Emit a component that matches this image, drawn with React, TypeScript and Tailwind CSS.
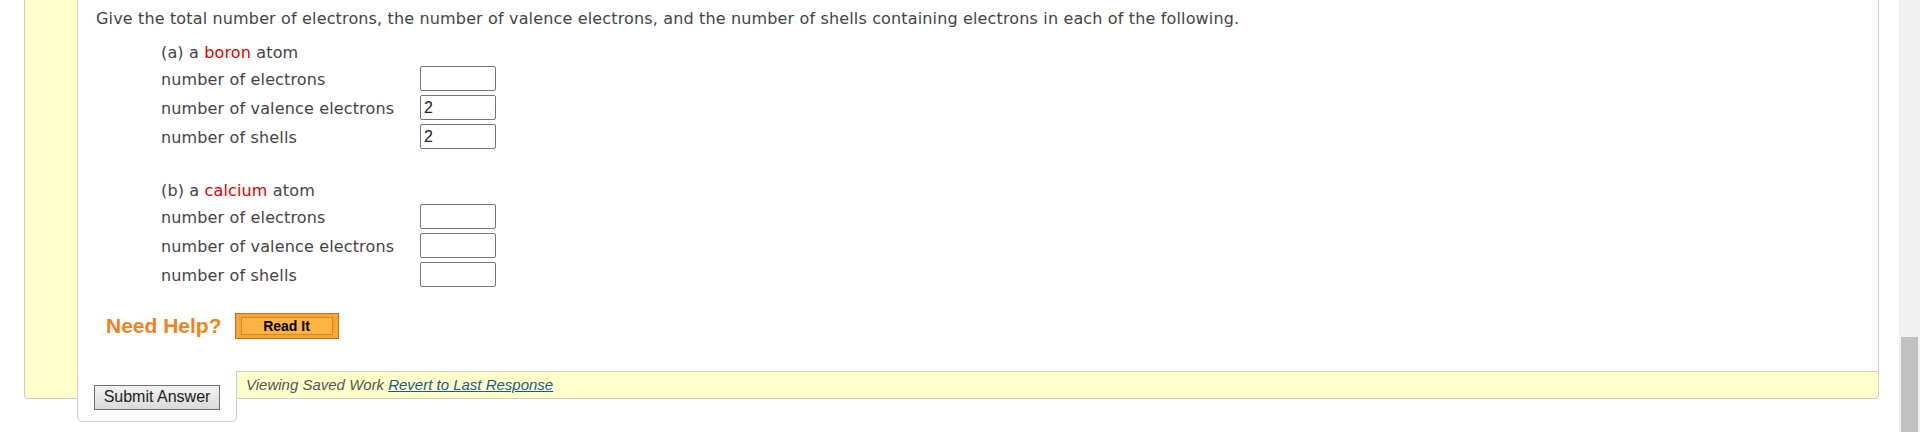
import React from "react";

const questions = [
  {
    label: "(a)",
    element: "boron",
    rows: [
      { text: "number of electrons", value: "" },
      { text: "number of valence electrons", value: "2" },
      { text: "number of shells", value: "2" },
    ],
  },
  {
    label: "(b)",
    element: "calcium",
    rows: [
      { text: "number of electrons", value: "" },
      { text: "number of valence electrons", value: "" },
      { text: "number of shells", value: "" },
    ],
  },
];

const AnswerBox = ({ value }: { value: string }) => (
  <input
    readOnly
    value={value}
    className="w-[76px] h-[25px] border border-[#767676] rounded-[2px] px-[3px] bg-white text-[16px] tracking-normal text-[#222] font-['Liberation_Sans',Arial,sans-serif] outline-none"
  />
);

const QuestionPart = ({ part }: { part: (typeof questions)[number] }) => (
  <div className="flex flex-col">
    <div className="h-[20px] leading-[22px]">
      {part.label} a <span className="text-[#e00000]">{part.element}</span> atom
    </div>
    <div className="mt-[4px] flex flex-col gap-[4px]">
      {part.rows.map((row) => (
        <div key={row.text} className="flex items-center h-[25px]">
          <span className="w-[259px] pt-[2px]">{row.text}</span>
          <AnswerBox value={row.value} />
        </div>
      ))}
    </div>
  </div>
);

export default function App() {
  return (
    <div className="flex w-[1920px] h-[432px] bg-white overflow-hidden">
      <div className="flex-1 flex flex-col pl-[24px]">
        {/* question panel */}
        <div className="flex w-[1855px] h-[371px]">
          <div className="w-[53px] border-l border-[#cccccc] bg-[#ffffcc]" />
          <div className="flex-1 flex flex-col border-l border-r border-l-[#d6d6c2] border-r-[#cccccc] bg-white text-[16px] tracking-[0.15px] text-[#444] font-['DejaVu_Sans',Verdana,sans-serif]">
            <div className="pl-[18px] pt-[8px] h-[28px] leading-[22px] whitespace-nowrap">
              Give the total number of electrons, the number of valence electrons, and the number of shells containing electrons in each of the following.
            </div>
            <div className="ml-[83px] mt-[14px] flex flex-col gap-[31px]">
              {questions.map((part) => (
                <QuestionPart key={part.label} part={part} />
              ))}
            </div>
            <div className="mt-[26px] pl-[28px] flex items-center gap-[13px] tracking-normal">
              <span className="text-[21px] leading-[26px] font-bold text-[#f0831d] font-['Liberation_Sans',Arial,sans-serif]">
                Need Help?
              </span>
              <button className="w-[104px] h-[26px] border border-[#c0701f] bg-[#f7a534] px-[5px] py-[3px] flex">
                <span className="flex-1 flex items-center justify-center border border-[#d5861f] bg-[#fdb443] text-[14px] font-bold text-black font-['Liberation_Sans',Arial,sans-serif]">
                  Read It
                </span>
              </button>
            </div>
          </div>
        </div>
        {/* bottom row */}
        <div className="flex w-[1855px] items-start">
          <div className="w-[53px] h-[28px] border-l border-b border-[#cccccc] rounded-bl-[4px] bg-[#ffffcc]" />
          <div className="w-[160px] h-[51px] border-l border-r border-b border-[#cccccc] rounded-b-[5px] bg-white pl-[16px] pt-[13px]">
            <button className="w-[126px] h-[25px] border border-[#707070] bg-gradient-to-b from-[#f2f2f2] to-[#dadada] text-[16px] leading-[22px] text-[#222] font-['Liberation_Sans',Arial,sans-serif]">
              Submit Answer
            </button>
          </div>
          <div className="flex-1 h-[28px] border-t border-r border-b border-[#cccccc] rounded-br-[4px] bg-[#ffffcc] pl-[9px] flex items-center text-[15px] italic font-['Liberation_Sans',Arial,sans-serif]">
            <span className="text-[#555]">Viewing Saved Work</span>
            <a href="#" className="ml-[4px] text-[#1b5a88] underline">
              Revert to Last Response
            </a>
          </div>
        </div>
      </div>
      {/* scrollbar */}
      <div className="w-[21px] h-full bg-[#f1f1f1] flex flex-col justify-end">
        <div className="ml-[2px] w-[17px] h-[95px] bg-[#c1c1c1]" />
      </div>
    </div>
  );
}
